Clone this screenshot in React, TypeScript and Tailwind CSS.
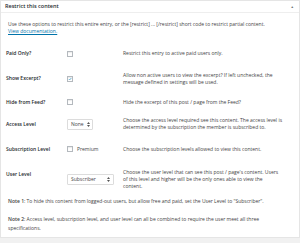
import React from "react";

function Check({ checked = false }: { checked?: boolean }) {
  return (
    <span className="inline-flex h-[6px] w-[6px] items-center justify-center border border-[#b4b9be] bg-white shadow-[inset_0_1px_1px_rgba(0,0,0,0.08)]">
      {checked && (
        <svg viewBox="0 0 10 10" className="h-[6px] w-[6px]">
          <path d="M2 5.2 L4.2 7.4 L8.2 2.6" fill="none" stroke="#1e8cbe" strokeWidth="1.6" />
        </svg>
      )}
    </span>
  );
}

function Select({ label, width }: { label: string; width: string }) {
  return (
    <span
      className={`inline-flex h-[11px] items-center justify-between gap-[3px] rounded-[1px] border border-[#dcdcdc] bg-white pl-[3px] pr-[3px] ${width}`}
    >
      <span>{label}</span>
      <svg viewBox="0 0 6 10" className="h-[5px] w-[3px] shrink-0">
        <path d="M3 0 L6 4 L0 4 Z M3 10 L6 6 L0 6 Z" fill="#555" />
      </svg>
    </span>
  );
}

const rows: { label: string; control: React.ReactNode; desc: React.ReactNode; h: string; labelCls?: string }[] = [
  {
    label: "Paid Only?",
    control: <Check />,
    desc: "Restrict this entry to active paid users only.",
    h: "h-[23px]",
  },
  {
    label: "Show Excerpt?",
    control: <Check checked />,
    desc: "Allow non active users to view the excerpt? If left unchecked, the message defined in settings will be used.",
    h: "h-[27px]",
  },
  {
    label: "Hide from Feed?",
    control: <Check />,
    desc: "Hide the excerpt of this post / page from the Feed?",
    h: "h-[20px]",
  },
  {
    label: "Access Level",
    control: <Select label="None" width="w-[26px]" />,
    desc: "Choose the access level required see this content. The access level is determined by the subscription the member is subscribed to.",
    h: "h-[24px]",
  },
  {
    label: "Subscription Level",
    control: (
      <span className="inline-flex items-center gap-[4px]">
        <Check />
        <span>Premium</span>
      </span>
    ),
    desc: "Choose the subscription levels allowed to view this content.",
    h: "h-[26px]",
  },
  {
    label: "User Level",
    control: <Select label="Subscriber" width="w-[47px]" />,
    desc: (
      <>
        Choose the user level that can see this post / page's content. Users
        <br />
        of this level and higher will be the only ones able to view the
        <br />
        content.
      </>
    ),
    h: "h-[34px]",
    labelCls: "self-start mt-[9px]",
  },
];

export default function App() {
  return (
    <div className="h-[243px] w-[300px] overflow-hidden bg-[#f1f1f1] font-['Open_Sans',sans-serif] text-[5px] leading-[7px] text-[#444]">
      <div className="h-[238px] border border-[#e5e5e5] bg-white">
        <div className="flex h-[12px] items-center justify-between border-b border-[#eee] pl-[4px] pr-[5px]">
          <span className="text-[5.5px] font-semibold text-[#23282d]">Restrict this content</span>
          <span className="text-[3.5px] text-[#72777c]">▲</span>
        </div>

        <div className="pl-[7px] pr-[10px] pt-[8px]">
          <p>
            Use these options to restrict this entire entry, or the [restrict] ... [/restrict] short code to restrict
            partial content.
          </p>
          <a className="text-[#0073aa] underline">View documentation.</a>
        </div>

        <div className="mt-[7px]">
          {rows.map((r) => (
            <div key={r.label} className={`grid grid-cols-[61px_56px_1fr] items-center pl-[5px] pr-[6px] ${r.h}`}>
              <span className={`font-semibold text-[#23282d] ${r.labelCls ?? ""}`}>{r.label}</span>
              <span className="flex items-center">{r.control}</span>
              <span>{r.desc}</span>
            </div>
          ))}
        </div>

        <div className="mt-[1px] flex flex-col gap-[9.5px] pl-[7px] pr-[10px] leading-[8.5px]">
          <p>
            <span className="font-semibold">Note 1</span>: To hide this content from logged-out users, but allow free and
            paid, set the User Level to "Subscriber".
          </p>
          <p>
            <span className="font-semibold">Note 2</span>: Access level, subscription level, and user level can all be
            combined to require the user meet all three
            <br />
            specifications.
          </p>
        </div>
      </div>
    </div>
  );
}
